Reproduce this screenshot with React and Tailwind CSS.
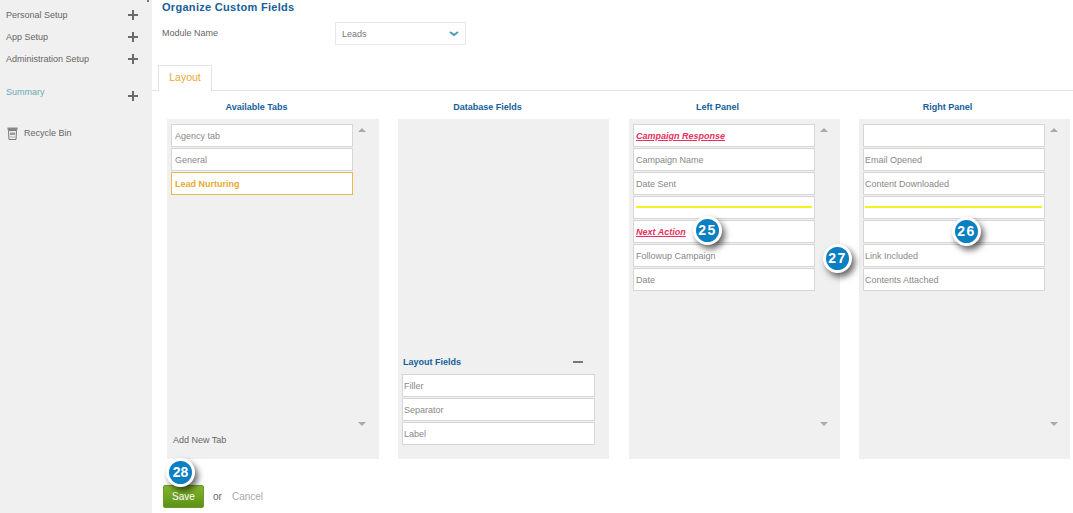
const sideLinks = ["Personal Setup", "App Setup", "Administration Setup"];

const leftItems = [
  { label: "Campaign Response", kind: "heading" },
  { label: "Campaign Name" },
  { label: "Date Sent" },
  { kind: "line" },
  { label: "Next Action", kind: "heading" },
  { label: "Followup Campaign" },
  { label: "Date" },
];

const rightItems = [
  {},
  { label: "Email Opened" },
  { label: "Content Downloaded" },
  { kind: "line" },
  {},
  { label: "Link Included" },
  { label: "Contents Attached" },
];

function PlusIcon() {
  return (
    <svg width="10" height="10" viewBox="0 0 10 10" className="shrink-0">
      <path d="M4 0h2v4h4v2H6v4H4V6H0V4h4z" fill="#6b6b6b" />
    </svg>
  );
}

function BinIcon() {
  return (
    <svg width="11" height="13" viewBox="0 0 11 13" className="shrink-0">
      <path d="M0.500 0.500h10v2.500h-10z" fill="#888" />
      <path d="M1.500 3.500h8L9 12.500H2z" fill="none" stroke="#777" />
      <path d="M3 5.500h5v2.500H3z" fill="#999" />
      <path d="M3 10h5" stroke="#aaa" />
    </svg>
  );
}

function Sidebar() {
  return (
    <aside className="relative w-[152px] shrink-0 bg-[#f0f0f0] pl-[6px] pr-[14px] pt-[5px] text-[9px] text-[#666]">
      <div className="absolute right-[3px] top-0 h-[2px] w-[2px] bg-[#777]" />
      {sideLinks.map((link) => (
        <div key={link} className="flex h-[22px] items-center justify-between">
          <span>{link}</span>
          <span className="mb-[2px]">
            <PlusIcon />
          </span>
        </div>
      ))}
      <div className="mt-[15px] flex items-start justify-between">
        <span className="text-[#6fa8b5]">Summary</span>
        <span className="mt-[5px]">
          <PlusIcon />
        </span>
      </div>
      <div className="mt-[26px] flex items-center gap-[6px] pl-[1px]">
        <BinIcon />
        <span>Recycle Bin</span>
      </div>
    </aside>
  );
}

function FieldBox({ item, inset = "pl-[2px]" }) {
  return (
    <div className={`flex h-[23px] items-center overflow-hidden border border-[#d6d6d6] bg-white pr-[2px] text-[9px] text-[#888] ${inset}`}>
      {item.kind === "line" ? (
        <div className="mb-[1px] h-[2px] w-full bg-[#f2f21e]" />
      ) : item.kind === "heading" ? (
        <span className="pt-[2px] font-bold italic text-[#e8305f] underline">{item.label}</span>
      ) : (
        <span className="pt-[2px]">{item.label}</span>
      )}
    </div>
  );
}

function ScrollArrows() {
  return (
    <div className="flex flex-1 flex-col items-center justify-between pr-[8px] pt-[4px] pb-[33px]">
      <span className="h-0 w-0 border-x-[4px] border-b-[4px] border-x-transparent border-b-[#aaa]" />
      <span className="h-0 w-0 border-x-[4px] border-t-[4px] border-x-transparent border-t-[#aaa]" />
    </div>
  );
}

function Column({ title, width, titleWidth = "w-[179px]", children }) {
  return (
    <div className={width}>
      <h3 className={`mb-[6px] h-[11px] text-center text-[9px] font-bold leading-[11px] text-[#15609a] ${titleWidth}`}>
        {title}
      </h3>
      <div className="relative h-[340px] bg-[#f0f0f0]">{children}</div>
    </div>
  );
}

function FieldPanel({ title, items, inset }) {
  return (
    <Column title={title} width="w-[211px]" titleWidth="w-[177px]">
      <div className="flex h-full pl-[4px] pt-[5px]">
        <div className="flex w-[182px] flex-col gap-[1px]">
          {items.map((item, i) => (
            <FieldBox key={i} item={item} inset={inset} />
          ))}
        </div>
        <ScrollArrows />
      </div>
    </Column>
  );
}

function Badge({ n, className }) {
  return (
    <div
      className={`absolute flex h-[29px] w-[29px] items-center justify-center rounded-full border-[3px] border-white bg-[#0a7fc2] text-[14px] font-bold text-white shadow-[3px_4px_6px_rgba(0,0,0,0.6)] ${className}`}
    >
      {n}
    </div>
  );
}

export default function App() {
  return (
    <div className="relative flex h-[513px] w-[1073px] overflow-hidden bg-white font-['Liberation_Sans',Arial,sans-serif]">
      <Sidebar />
      <main className="flex-1">
        <h1 className="pl-[10px] text-[11px] font-bold leading-[14px] tracking-[0.3px] text-[#15609a]">
          Organize Custom Fields
        </h1>
        <div className="mt-[8px] flex items-start pl-[10px] text-[9px] text-[#666]">
          <span className="mt-[5px] w-[173px]">Module Name</span>
          <div className="flex h-[23px] w-[131px] items-center justify-between border border-[#e8e8e8] px-[6px] text-[#777]">
            <span className="pt-[2px]">Leads</span>
            <svg width="10" height="6" viewBox="0 0 10 6">
              <path d="M1 1l4 3 4-3" fill="none" stroke="#4a9bb5" strokeWidth="2" />
            </svg>
          </div>
        </div>

        <div className="mt-[20px] flex h-[26px] items-end border-b border-[#e4e4e4] pl-[6px]">
          <div className="-mb-[1px] flex h-[26px] w-[54px] items-center justify-center border border-b-0 border-[#e4e4e4] bg-white pb-[1px] text-[10.500px] text-[#e8a92e]">
            Layout
          </div>
        </div>

        <div className="mt-[11px] flex pl-[15px]">
          <Column title="Available Tabs" width="mr-[19px] w-[212px]">
            <div className="flex h-full pl-[4px] pt-[5px]">
              <div className="flex w-[182px] flex-col gap-[1px]">
                <FieldBox item={{ label: "Agency tab" }} inset="pl-[3px]" />
                <FieldBox item={{ label: "General" }} inset="pl-[3px]" />
                <div className="flex h-[23px] items-center border border-[#ecb74f] bg-white pl-[3px] pt-[2px] text-[9px] font-bold text-[#e8a92e]">
                  Lead Nurturing
                </div>
              </div>
              <ScrollArrows />
            </div>
            <span className="absolute bottom-[12px] left-[6px] text-[9px] text-[#666]">Add New Tab</span>
          </Column>

          <Column title="Database Fields" width="mr-[20px] w-[211px]">
            <div className="flex h-full flex-col justify-end px-[4px] pb-[14px]">
              <div className="mb-[5px] flex w-[193px] items-center justify-between pl-[1px] pr-[12px]">
                <span className="text-[9px] font-bold text-[#15609a]">Layout Fields</span>
                <span className="h-[2px] w-[10px] bg-[#777]" />
              </div>
              <div className="flex w-[193px] flex-col gap-[1px]">
                <FieldBox item={{ label: "Filler" }} inset="pl-[1px]" />
                <FieldBox item={{ label: "Separator" }} inset="pl-[1px]" />
                <FieldBox item={{ label: "Label" }} inset="pl-[1px]" />
              </div>
            </div>
          </Column>

          <div className="mr-[19px]">
            <FieldPanel title="Left Panel" items={leftItems} inset="pl-[2px]" />
          </div>
          <FieldPanel title="Right Panel" items={rightItems} inset="pl-[1px]" />
        </div>

        <div className="mt-[26px] flex items-center pl-[11px] text-[10px]">
          <button className="h-[23px] w-[41px] rounded-[2px] border border-[#6b9a22] bg-gradient-to-b from-[#84b52e] to-[#5c9216] text-[10px] text-white">
            Save
          </button>
          <span className="ml-[9px] text-[#666]">or</span>
          <span className="ml-[10px] text-[#aaa]">Cancel</span>
        </div>
      </main>

      <Badge n="25" className="left-[693px] top-[216px] tracking-[1.5px]" />
      <Badge n="26" className="left-[952px] top-[217px] tracking-[1.5px]" />
      <Badge n="27" className="left-[823px] top-[244px] tracking-[1.5px]" />
      <Badge n="28" className="left-[166px] top-[458px]" />
    </div>
  );
}
